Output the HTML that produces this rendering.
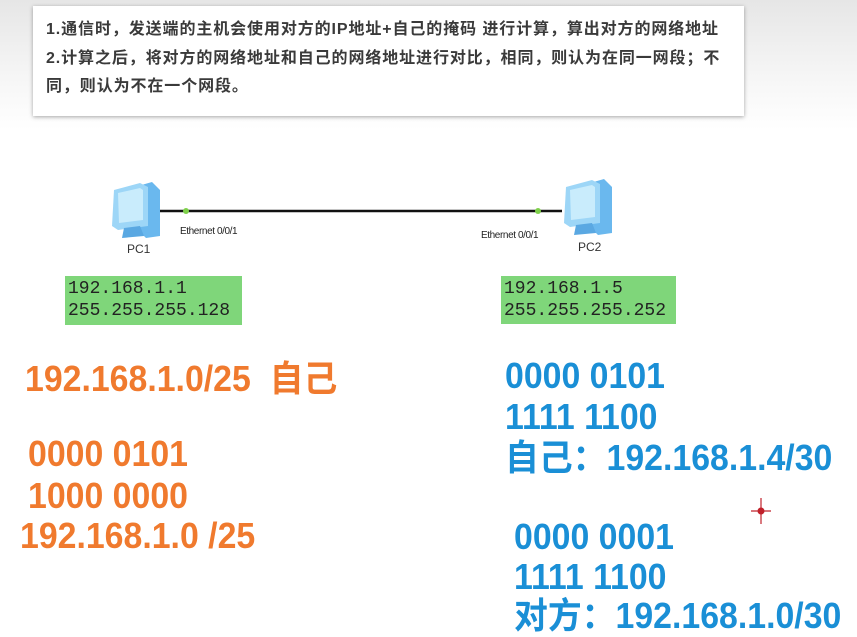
<!DOCTYPE html>
<html><head><meta charset="utf-8">
<style>
html,body{margin:0;padding:0;}
body{width:857px;height:637px;position:relative;overflow:hidden;background:#fff;font-family:"Liberation Sans","Noto Sans CJK SC",sans-serif;}
.top{position:absolute;left:0;top:0;width:857px;height:130px;background:linear-gradient(#e6e6e6,#f6f6f6 60%,#fff);}
.box{position:absolute;left:33px;top:6px;width:711px;height:110px;background:#fff;box-shadow:0 1px 4px rgba(0,0,0,.35);}
.box div{position:absolute;left:13px;font-size:16px;line-height:18px;font-weight:bold;color:#3a3a3a;white-space:nowrap;letter-spacing:0.9px;}
.g{position:absolute;background:#7fd67a;font-family:"Liberation Mono",monospace;font-size:18px;line-height:22px;color:#222;padding:2px 3px;box-sizing:border-box;}
.b{position:absolute;font-size:36px;line-height:36px;font-weight:bold;white-space:nowrap;transform:scaleX(0.94);transform-origin:left top;}
.o{color:#f07a2e;}
.u{color:#1a8fd6;}
.s{position:absolute;font-size:10px;color:#222;letter-spacing:-0.4px;}
.pc{position:absolute;font-size:12px;color:#333;}
</style></head><body>
<div class="top"></div>
<div class="box">
<div style="top:15px">1.通信时，发送端的主机会使用对方的IP地址+自己的掩码 进行计算，算出对方的网络地址</div>
<div style="top:44px">2.计算之后，将对方的网络地址和自己的网络地址进行对比，相同，则认为在同一网段；不</div>
<div style="top:72px">同，则认为不在一个网段。</div>
</div>

<svg style="position:absolute;left:0;top:0" width="857" height="260">
<line x1="160" y1="211" x2="562" y2="211" stroke="#111" stroke-width="2.5"/>
<circle cx="186" cy="211" r="3" fill="#7ed04a"/>
<circle cx="538" cy="211" r="3" fill="#7ed04a"/>
<g id="p1">
<polygon points="138,186 152,182 160,190 160,236 146,238 140,232" fill="#6ab8ee"/>
<polygon points="114,190 140,183 148,187 148,226 118,230 112,226" fill="#9dd6f7"/>
<polygon points="118,193 140,188 143,190 143,220 119,223" fill="#c9ecfc"/>
<polygon points="124,228 140,226 144,236 122,238" fill="#5aa8e2"/>
</g>
<use href="#p1" transform="translate(452,-3)"/>
</svg>
<div class="s" style="left:180px;top:226px">Ethernet 0/0/1</div>
<div class="s" style="left:481px;top:230px">Ethernet 0/0/1</div>
<div class="pc" style="left:127px;top:242px">PC1</div>
<div class="pc" style="left:578px;top:240px">PC2</div>

<div class="g" style="left:65px;top:276px;width:177px;height:49px">192.168.1.1<br>255.255.255.128</div>
<div class="g" style="left:501px;top:276px;width:175px;height:48px">192.168.1.5<br>255.255.255.252</div>

<div class="b o" style="left:25px;top:361px;font-weight:600">192.168.1.0/25&nbsp; 自己</div>
<div class="b o" style="left:28px;top:436px">0000 0101</div>
<div class="b o" style="left:28px;top:478px">1000 0000</div>
<div class="b o" style="left:20px;top:518px">192.168.1.0 /25</div>

<div class="b u" style="left:505px;top:358px">0000 0101</div>
<div class="b u" style="left:505px;top:399px">1111 1100</div>
<div class="b u" style="left:505px;top:440px">自己：192.168.1.4/30</div>
<div class="b u" style="left:514px;top:519px">0000 0001</div>
<div class="b u" style="left:514px;top:559px">1111 1100</div>
<div class="b u" style="left:514px;top:598px">对方：192.168.1.0/30</div>

<svg style="position:absolute;left:748px;top:496px" width="26" height="30">
<line x1="13" y1="2" x2="13" y2="28" stroke="#c0202a" stroke-width="1.2"/>
<line x1="3" y1="15" x2="23" y2="15" stroke="#c0202a" stroke-width="1.2"/>
<circle cx="13" cy="15" r="3.5" fill="#c0202a"/>
</svg>
</body></html>
